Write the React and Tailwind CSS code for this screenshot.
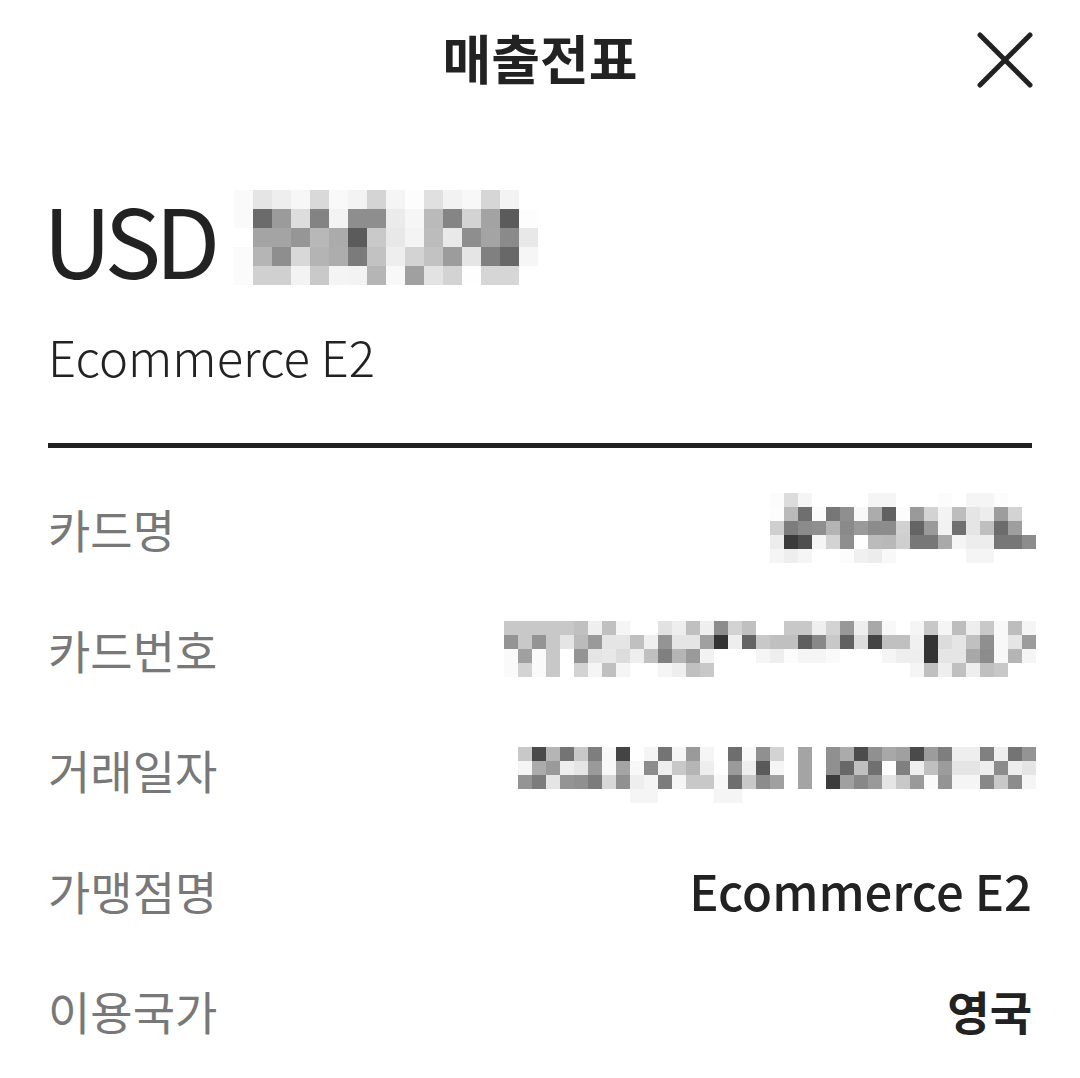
const font = { fontFamily: '"Noto Sans CJK KR", "Noto Sans", sans-serif' }

// blurred (mosaic) values, grey levels per cell
const amountMosaic = [
  'fa e5 ee f7 d9 f9 f3 d4 f5 fd e0 f2 f8 d6 f3 ff',
  'fa 6b 9b dd 83 f3 8e 8e eb f6 ba 85 d3 a3 5b fd',
  'ff a4 a4 96 b8 ab 5b c9 e8 f4 bc e9 8e a4 8a e8',
  'fb b5 8e d8 b4 ad 7b c2 ee d3 c2 9c e5 80 68 f6',
  'fb d0 d0 f3 c9 f4 f3 b5 f8 a0 e3 d3 fe d6 d6 ff',
]

const cardNameMosaic = [
  'fc dc f5 ff ff ff ff f5 f5 ff ff ff fc ff f5 f5 fc ff ff',
  'fd ba 6f fb 77 8f f8 ac 61 fc 9a d3 f3 bd e5 ed 9d d3 ff',
  'cf 7d 8b 8f b4 8a 9a 8c 8c d1 64 9a f2 70 e5 bf 6c 9e ff',
  'ed 3b 4e f5 d3 8e ff bb b8 cf 77 77 a9 f5 ed ed 77 77 8c',
  'f5 ee f5 ff ff fc f0 ec f8 ff ff ff ff ff f5 f5 ff ff ff',
]

const cardNumberMosaic = [
  'c8 c8 c8 c8 c8 c0 ef c0 f5 ff ff e2 ee c0 ef 8c d3 c0 ff ff c8 c8 ef d3 98 ee a8 f8 ff f5 c8 f5 bd ee c8 f8 bd f5',
  '94 c8 94 c8 e5 bb 9a e5 e5 c0 ef 94 e5 e5 a0 33 ee 64 c8 c0 c0 5e 88 c8 60 dc 44 c0 c0 f0 33 dc e5 c0 8f f8 e5 9c',
  'fa a0 fa c8 ff 94 e5 e8 dc ee c0 80 b5 9a f2 ff ff ff f5 ee fc f5 f5 fa ff ff ff f5 ee ee 33 e5 e5 a8 8c f8 b5 f5',
  'fa d3 fa c8 ff d3 f5 c0 f5 ff ff f5 ee c0 c8 ff ff ff ff ff ff ff ff ff ff ff ff ff ff f5 c0 ee c0 ee c0 c8 ff ff',
]

const dateMosaic = [
  'c8 4a b5 74 c8 7e f8 44 ff f5 74 f5 9a f5 ff 6e f8 90 d3 ff a4 ff 90 ab 4c 90 a8 a0 4a 9c 7e ee ee 80 ee 74 94',
  'f5 ab 9a ee e5 9a f8 a4 f8 8c ee c8 b5 ee ff 9a ee 5a f5 ff a4 ff 90 68 c0 70 ff 80 ee c0 9c e5 e5 ee 8c ee e5',
  '94 7c e5 94 90 7c d8 90 ee f5 7c f5 c8 c8 f8 6e c8 8c a0 ff a4 ff 3c a0 88 9a e5 c8 9a fa 94 f5 f5 88 c8 8c f5',
  'ff ff ff ff ff ff ff ff f5 f5 ff ff ff ff f5 f5 ff ff ff ff ff ff ff ff ff ff ff ff ff ff ff ff ff ff ff ff ff',
]

function Mosaic({ rows, cell }) {
  const grid = rows.map((r) => r.split(' '))
  const cols = grid[0].length
  return (
    <svg width={cols * cell} height={grid.length * cell} shapeRendering="crispEdges" className="block shrink-0">
      {grid.map((row, y) =>
        row.map((v, x) => (
          <rect key={`${x}-${y}`} x={x * cell} y={y * cell} width={cell} height={cell} fill={`#${v}${v}${v}`} />
        ))
      )}
    </svg>
  )
}

function CloseIcon() {
  return (
    <svg width="58" height="58" viewBox="0 0 58 58" fill="none" stroke="#222222" strokeWidth="5" strokeLinecap="round">
      <path d="M4 4L54 54M54 4L4 54" />
    </svg>
  )
}

function Row({ label, children }) {
  return (
    <div className="h-[120.5px] flex items-center justify-between">
      <span className="text-[46px] leading-none text-[#787878]">{label}</span>
      {children}
    </div>
  )
}

export default function App() {
  return (
    <div className="w-[1080px] h-[1078px] bg-white overflow-hidden px-12 text-[#222222]" style={font}>
      {/* header */}
      <div className="relative h-[114px] flex items-center justify-center">
        <h1 className="text-[53px] font-bold leading-none">매출전표</h1>
        <button className="absolute -right-[2px] top-[31px]">
          <CloseIcon />
        </button>
      </div>

      {/* amount */}
      <div className="mt-[76px] h-[95px] flex items-center gap-[20px]">
        <span className="-ml-[5px] text-[95px] leading-none tracking-[-6px]">USD</span>
        <Mosaic rows={amountMosaic} cell={19} />
      </div>
      <div className="mt-[40px] h-[60px] flex items-center">
        <span className="text-[49px] leading-none font-light">Ecommerce E2</span>
      </div>

      <div className="mt-[58px] h-[5px] bg-[#222222]" />

      <div className="mt-[20px] flex flex-col">
        <Row label="카드명">
          <div className="-mr-1"><Mosaic rows={cardNameMosaic} cell={14} /></div>
        </Row>
        <Row label="카드번호">
          <div className="-mr-1"><Mosaic rows={cardNumberMosaic} cell={14} /></div>
        </Row>
        <Row label="거래일자">
          <div className="-mr-1 pt-[12px]"><Mosaic rows={dateMosaic} cell={14} /></div>
        </Row>
        <Row label="가맹점명">
          <span className="text-[49px] leading-none font-medium">Ecommerce E2</span>
        </Row>
        <Row label="이용국가">
          <span className="text-[46px] leading-none font-bold">영국</span>
        </Row>
      </div>
    </div>
  )
}
